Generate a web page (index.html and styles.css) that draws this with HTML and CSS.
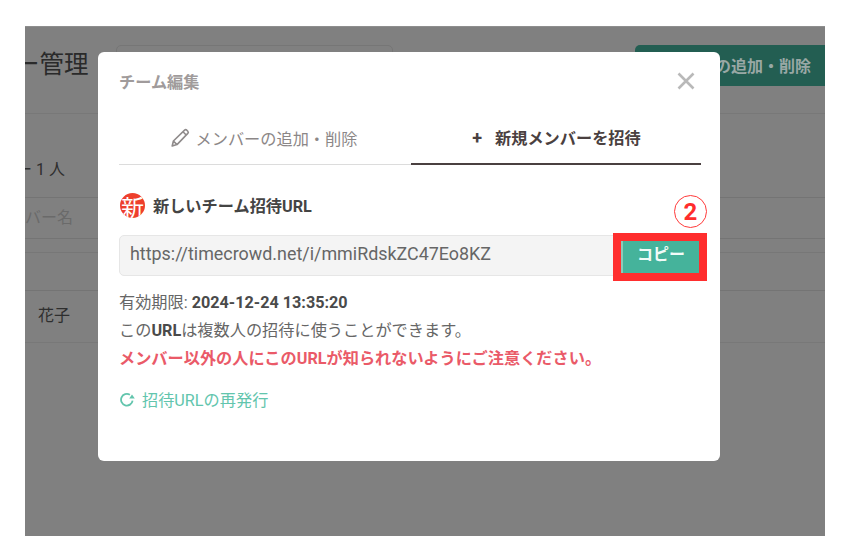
FILE: index.html
```html
<!DOCTYPE html>
<html lang="ja">
<head>
<meta charset="utf-8">
<title>チーム編集</title>
<link rel="stylesheet" href="styles.css">
</head>
<body>
<div class="screen">
  <div class="page">
    <header class="page-head">
      <h1 class="page-title">ー管理</h1>
      <div class="search"></div>
      <div class="add-btn">メンバーの追加・削除</div>
    </header>
    <p class="count">ー 1 人</p>
    <div class="filter">バー名</div>
    <div class="table-head"></div>
    <div class="table-row">花子</div>
  </div>

  <div class="modal">
    <div class="modal-head">
      <h2 class="modal-title">チーム編集</h2>
      <svg class="close" viewBox="0 0 18 18" width="18" height="18"><path d="M1.5 1.5 16.5 16.5M16.5 1.5 1.5 16.5"/></svg>
    </div>
    <div class="tabs">
      <div class="tab">
        <svg class="pencil" viewBox="0 0 20 20" width="20" height="20"><path d="M2.2 18 3.4 13 14.6 2.2a1.6 1.6 0 0 1 2.2 0l1 1a1.6 1.6 0 0 1 0 2.2L7 16.6ZM3.4 13 7 16.6M13 3.8l3.4 3.4"/></svg>
        <span>メンバーの追加・削除</span>
      </div>
      <div class="tab tab-active"><span class="plus">+</span><span>新規メンバーを招待</span></div>
    </div>

    <div class="section-head">
      <span class="new-badge">新</span>
      <h3 class="section-title">新しいチーム招待URL</h3>
      <span class="step">2</span>
    </div>

    <div class="url-row">
      <div class="url-input">https://timecrowd.net/i/mmiRdskZC47Eo8KZ</div>
      <div class="copy-mark"><button class="copy-btn" type="button">コピー</button></div>
    </div>

    <p class="info">有効期限: <b>2024-12-24 13:35:20</b></p>
    <p class="info">この<b>URL</b>は複数人の招待に使うことができます。</p>
    <p class="info warn">メンバー以外の人にこのURLが知られないようにご注意ください。</p>

    <a class="reissue">
      <svg viewBox="0 0 16 16" width="16" height="16"><path class="arc" d="M13.6 9.6A5.8 5.8 0 1 1 10.9 3.8"/><path class="tip" d="M10.2 7.6h5.6L13 3.6Z"/></svg>
      <span>招待URLの再発行</span>
    </a>
  </div>
</div>
</body>
</html>
```

FILE: styles.css
```css
* { box-sizing: border-box; }
html, body { margin: 0; padding: 0; background: #fff; }
body {
  width: 845px;
  height: 549px;
  padding: 26px 20px 13px 25px;
  font-family: Roboto, "Noto Sans CJK JP", sans-serif;
  overflow: hidden;
}
h1, h2, h3, p { margin: 0; font-weight: inherit; }

.screen {
  position: relative;
  width: 800px;
  height: 510px;
  background: #808080;
  overflow: hidden;
  box-shadow: inset 0 1px 0 #8e8e8e;
}

/* dimmed page behind the dialog */
.page { color: #2e2e2e; }
.page-head {
  display: flex;
  align-items: flex-start;
  height: 88px;
  padding-top: 19px;
  border-bottom: 1px solid #787878;
}
.page-title {
  width: 101px;
  margin-left: -10px;
  font-size: 24.5px;
  line-height: 40px;
  font-weight: 400;
  color: #2a2a2a;
}
.search {
  width: 277px;
  height: 40px;
  border: 1px solid #767676;
  border-radius: 5px;
}
.add-btn {
  display: flex;
  align-items: center;
  justify-content: flex-end;
  width: 190px;
  height: 41px;
  margin-left: auto;
  padding-right: 14px;
  padding-bottom: 1px;
  background: #235e52;
  border-radius: 5px 0 0 5px;
  color: #99a8a5;
  font-size: 16px;
  font-weight: 700;
}
.count {
  height: 83px;
  padding-top: 44px;
  margin-left: -9px;
  font-size: 16px;
  line-height: 24px;
  color: #2e2e2e;
}
.filter {
  height: 42px;
  border-top: 1px solid #747474;
  border-bottom: 1px solid #747474;
  font-size: 16px;
  line-height: 39px;
  color: #6a6a6a;
}
.table-head {
  height: 39px;
  margin-top: 13px;
  border-top: 1px solid #777;
  border-bottom: 1px solid #747474;
}
.table-row {
  height: 52px;
  padding-left: 13px;
  border-bottom: 1px solid #787878;
  font-size: 16px;
  line-height: 50px;
  color: #2e2e2e;
}

/* dialog */
.modal {
  position: absolute;
  left: 73px;
  top: 26px;
  width: 622px;
  height: 409px;
  padding: 0 19px 0 21px;
  background: #fff;
  border-radius: 6px;
  color: #5c5c5c;
}
.modal-head {
  display: flex;
  align-items: center;
  justify-content: space-between;
  height: 58px;
  padding: 0 6px 1px 0;
}
.modal-title {
  font-size: 16.2px;
  font-weight: 700;
  color: #a09b9b;
}
.close { fill: none; stroke: #b9b9b9; stroke-width: 2.6; }

.tabs { display: flex; height: 55px; }
.tab {
  flex: 1;
  display: flex;
  align-items: center;
  justify-content: center;
  gap: 6px;
  padding: 1px 3px 0 0;
  font-size: 16.2px;
  color: #8c8787;
  border-bottom: 1px solid #dcdcdc;
}
.tab-active {
  gap: 13px;
  padding: 1px 0 0 1px;
  font-weight: 700;
  color: #4a4040;
  border-bottom: 2px solid #4a4040;
}
.plus { font-size: 18px; }
.pencil { fill: none; stroke: #8f8b8b; stroke-width: 1.6; stroke-linejoin: round; }

.section-head {
  position: relative;
  display: flex;
  align-items: center;
  gap: 8px;
  height: 27px;
  margin-top: 27px;
}
.new-badge {
  display: flex;
  align-items: center;
  justify-content: center;
  width: 25px;
  height: 25px;
  margin-left: 1px;
  border-radius: 50%;
  background: #ee3f2c;
  color: #fff;
  font-size: 23px;
  font-family: "Noto Sans CJK JP", sans-serif;
  overflow: hidden;
}
.section-title { margin-top: -2px; font-size: 16.2px; font-weight: 700; color: #444; }
.step {
  position: absolute;
  right: -6px;
  top: 3px;
  display: flex;
  align-items: center;
  justify-content: center;
  width: 33px;
  height: 33px;
  border: 1.5px solid #ff3a3a;
  border-radius: 50%;
  color: #ff2d2d;
  font-size: 24px;
  font-weight: 700;
  line-height: 1;
}

.url-row {
  position: relative;
  height: 41px;
  margin-top: 16px;
}
.url-input {
  height: 41px;
  width: 582px;
  padding-left: 10px;
  background: #f4f4f4;
  border: 1px solid #e6e6e6;
  border-radius: 5px;
  font-size: 17.9px;
  line-height: 35px;
  color: #666;
}
.copy-mark {
  position: absolute;
  left: 494px;
  top: -2px;
  width: 94px;
  height: 48px;
  border: 8px solid #ff2e2e;
  background: #fff;
}
.copy-btn {
  display: block;
  width: 100%;
  height: 100%;
  padding: 0 0 8px;
  border: 0;
  border-left: 2px solid #8ccab9;
  background: #45b39b;
  color: #f2fbf8;
  font-family: "Noto Sans CJK JP", sans-serif;
  font-size: 16px;
  font-weight: 700;
}

.info {
  font-size: 16.2px;
  line-height: 28px;
  color: #666;
}
.url-row + .info { margin-top: 13px; }
.info b { font-weight: 700; color: #4a4a4a; }
.warn { font-weight: 700; color: #ea5a68; }

.reissue {
  display: flex;
  align-items: center;
  gap: 7px;
  height: 28px;
  margin-top: 12px;
  font-size: 16.2px;
  color: #62c5ad;
}
.reissue svg { fill: none; }
.arc { stroke: #62c5ad; stroke-width: 1.8; }
.tip { fill: #62c5ad; }
```
